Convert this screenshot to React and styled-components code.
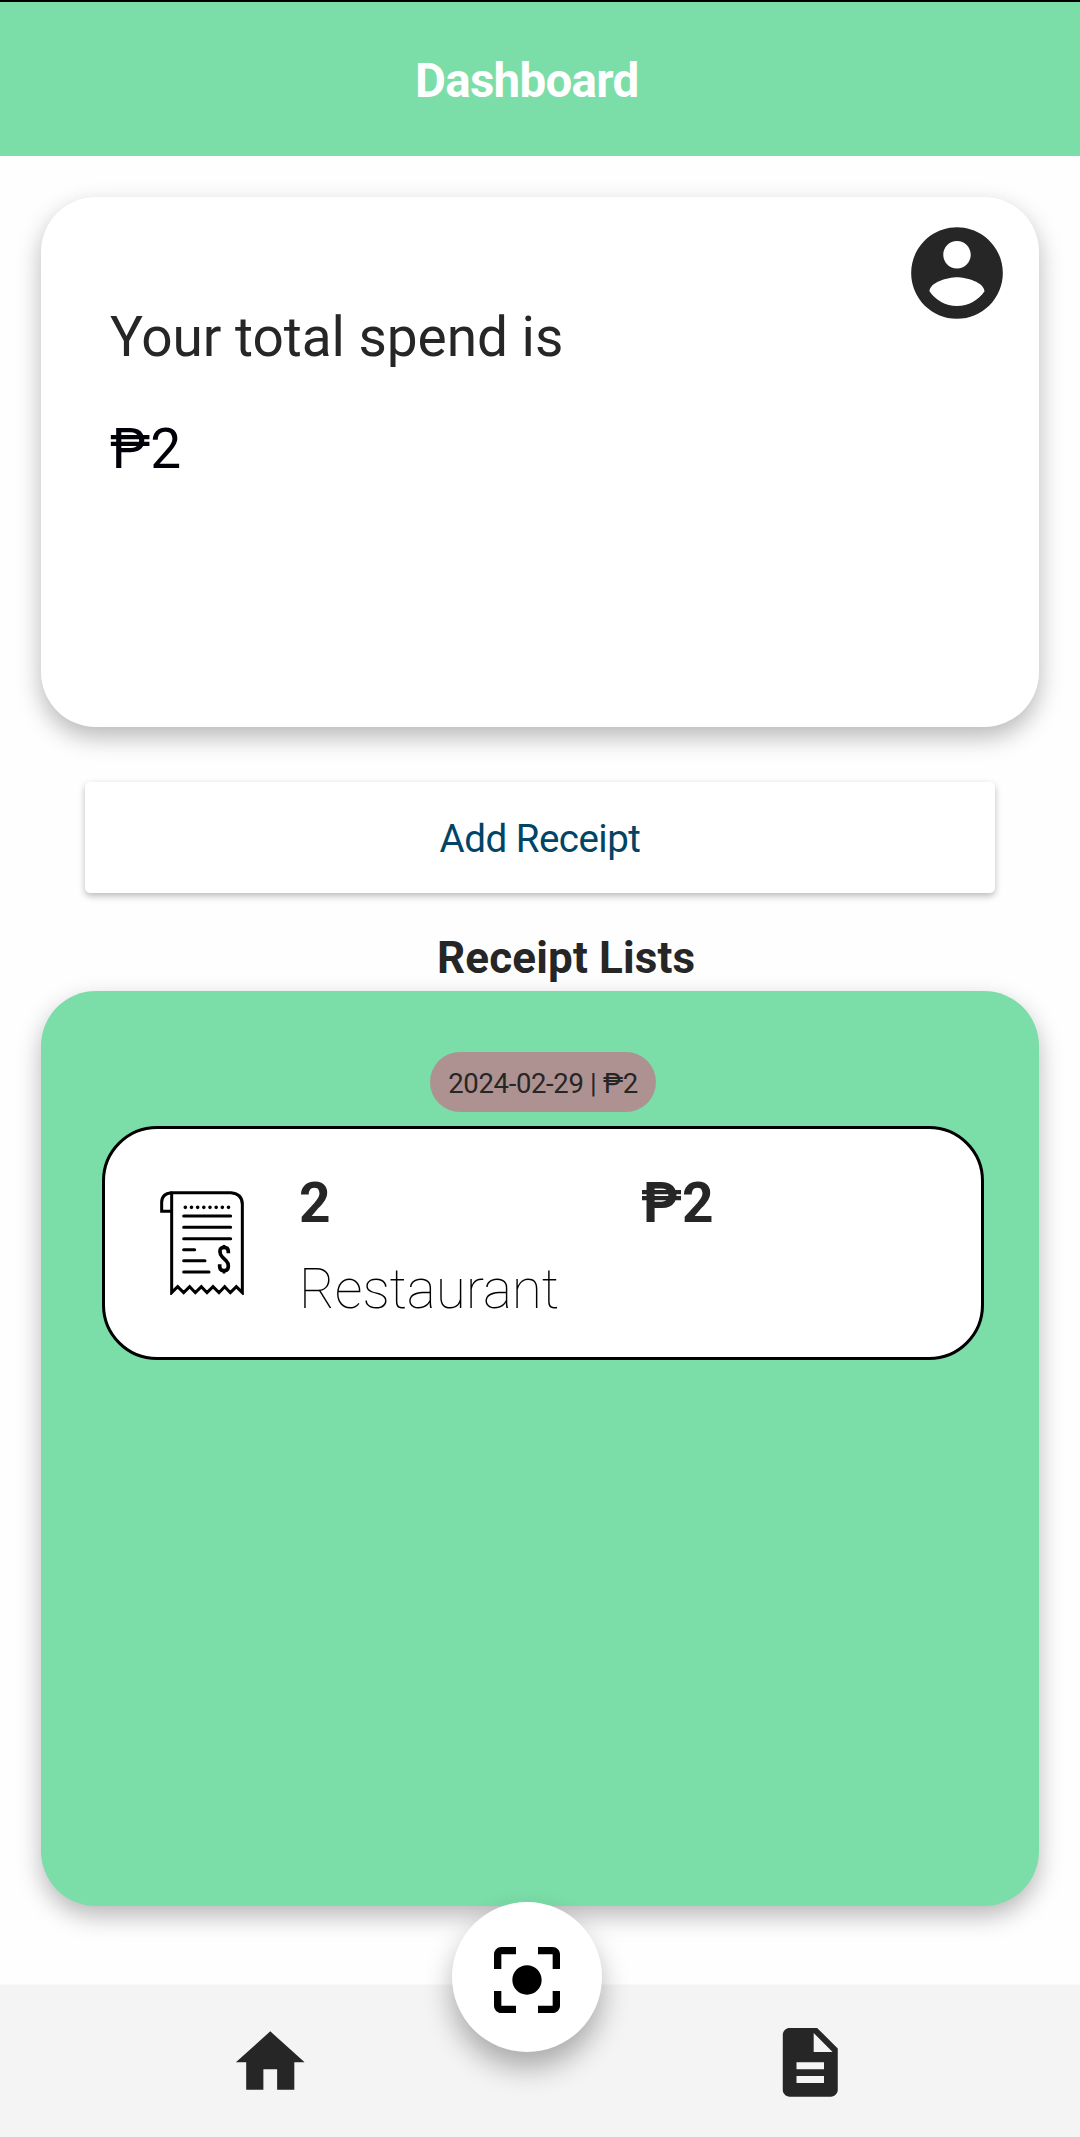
import React from "react";
import styled, { createGlobalStyle } from "styled-components";

const GlobalStyle = createGlobalStyle`
  *, *::before, *::after { box-sizing: border-box; }
  body {
    margin: 0;
    background: #fefefe;
    font-family: Roboto, "Noto Sans", sans-serif;
    color: #262626;
  }
`;

const Screen = styled.div`
  position: relative;
  display: flex;
  flex-direction: column;
  width: 1080px;
  height: 2137px;
  overflow: hidden;
  border-top: 2px solid #000;
  background: #fefefe;
`;

const Header = styled.header`
  display: flex;
  align-items: center;
  flex: none;
  height: 154px;
  padding: 3px 0 0 415px;
  background: #7bdda8;
`;

const Title = styled.h1`
  margin: 0;
  font-size: 47.5px;
  line-height: 60px;
  font-weight: 700;
  letter-spacing: -0.7px;
  color: #fff;
`;

const Content = styled.main`
  display: flex;
  flex-direction: column;
  flex: 1;
  padding: 41px 41px 0;
`;

const SpendCard = styled.section`
  display: flex;
  align-items: flex-start;
  justify-content: space-between;
  height: 530px;
  padding: 21px 27px 0 69px;
  border-radius: 55px;
  background: #fff;
  box-shadow: 0 10px 24px rgba(0, 0, 0, 0.28);
`;

const SpendText = styled.div`
  display: flex;
  flex-direction: column;
  gap: 48px;
  padding-top: 87px;
`;

const Line = styled.p`
  margin: 0;
  font-size: 55px;
  line-height: 64px;
  font-weight: ${(p) => p.$weight || 400};
  letter-spacing: ${(p) => p.$tracking || "-0.05px"};
  color: ${(p) => p.$color || "#262626"};
  white-space: nowrap;
`;

const Glyph = styled.svg`
  display: block;
  flex: none;
  width: ${(p) => p.$size}px;
  height: ${(p) => p.$size}px;
  fill: ${(p) => p.$color || "#262626"};
`;

const AddButton = styled.button`
  height: 111px;
  margin: 55px 44px 0;
  padding: 3px 0 0;
  border: 0;
  border-radius: 5px;
  background: #fff;
  box-shadow: 0 3px 7px rgba(0, 0, 0, 0.27);
  font: 400 38.5px/48px Roboto, "Noto Sans", sans-serif;
  letter-spacing: -0.5px;
  color: #004466;
`;

const ListHeading = styled.h2`
  margin: 35px 0 3px;
  padding-left: 396px;
  font-size: 44px;
  line-height: 60px;
  font-weight: 700;
  letter-spacing: 0.15px;
`;

const ListPanel = styled.section`
  display: flex;
  flex-direction: column;
  align-items: center;
  gap: 14px;
  height: 915px;
  padding: 61px 55px 0 61px;
  border-radius: 55px;
  background: #7bdda8;
  box-shadow: 0 10px 24px rgba(0, 0, 0, 0.28);
`;

const DatePill = styled.div`
  display: flex;
  align-items: center;
  justify-content: center;
  width: 226px;
  height: 60px;
  padding-top: 3px;
  border-radius: 30px;
  background: #ae9292;
  font-size: 27.5px;
  line-height: 34px;
  letter-spacing: -0.35px;
  white-space: nowrap;
`;

const ReceiptCard = styled.article`
  display: grid;
  grid-template-columns: 139px 342px 1fr;
  align-items: start;
  width: 100%;
  height: 234px;
  padding: 42px 0 0 55px;
  border: 3px solid #000;
  border-radius: 55px;
  background: #fff;
`;

const ReceiptDetails = styled.div`
  display: flex;
  flex-direction: column;
  gap: 22px;
`;

const ReceiptArt = styled.svg`
  width: 84px;
  height: 104px;
  margin-top: 20px;
  fill: none;
  stroke: #000;
  stroke-width: 9;
`;

const NavBar = styled.nav`
  display: flex;
  flex: none;
  height: 153px;
  border-top: 1px solid #f9f9f9;
  background: #f4f4f4;
`;

const Tab = styled.a`
  display: flex;
  flex: 1;
  align-items: center;
  justify-content: center;
  padding-top: 2px;
`;

const ScanButton = styled.button`
  position: absolute;
  left: 451.5px;
  bottom: 85px;
  display: flex;
  align-items: center;
  justify-content: center;
  width: 150px;
  height: 150px;
  padding: 6px 0 0 1px;
  border: 0;
  border-radius: 50%;
  background: #fff;
  box-shadow: 0 16px 28px rgba(0, 0, 0, 0.3);
`;

const icons = {
  account:
    "M12 2C6.48 2 2 6.48 2 12s4.48 10 10 10 10-4.48 10-10S17.52 2 12 2zm0 3c1.66 0 3 1.34 3 3s-1.34 3-3 3-3-1.34-3-3 1.34-3 3-3zm0 14.2c-2.5 0-4.71-1.28-6-3.22.03-1.99 4-3.08 6-3.08 1.99 0 5.97 1.09 6 3.08-1.29 1.94-3.5 3.22-6 3.22z",
  home: "M10 20v-6h4v6h5v-8h3L12 3 2 12h3v8z",
  document:
    "M14 2H6c-1.1 0-1.99.9-1.99 2L4 20c0 1.1.89 2 1.99 2H18c1.1 0 2-.9 2-2V8l-6-6zm2 16H8v-2h8v2zm0-4H8v-2h8v2zm-3-5V3.5L18.5 9H13z",
  scan: "M12 8c-2.21 0-4 1.79-4 4s1.79 4 4 4 4-1.79 4-4-1.79-4-4-4zm-7 7H3v4c0 1.1.9 2 2 2h4v-2H5v-4zM5 5h4V3H5c-1.1 0-2 .9-2 2v4h2V5zm14-2h-4v2h4v4h2V5c0-1.1-.9-2-2-2zm0 16h-4v2h4c1.1 0 2-.9 2-2v-4h-2v4z",
};

function Icon({ name, size, color }) {
  return (
    <Glyph viewBox="0 0 24 24" $size={size} $color={color} aria-hidden="true">
      <path d={icons[name]} />
    </Glyph>
  );
}

function ReceiptIcon() {
  return (
    <ReceiptArt viewBox="209 242 252 312" aria-hidden="true">
      <path d="M244 547V247H422Q456 250 456 282V547L438 529 420 547 403 529 386 547 368 529 350 547 333 529 315 547 298 529 280 547 262 529Z" />
      <path d="M244 247Q214 250 214 276V303H244" />
      <path d="M285 291H415" strokeWidth="11" strokeLinecap="round" strokeDasharray="0 18.5" />
      <path
        d="M280 317H421M280 351H421M280 385H421M280 418H313M280 451H344M280 485H356"
        strokeLinecap="round"
      />
      <path
        d="M414 429V424Q414 411 401 411T389 424Q389 433 396 440L408 452Q414 458 414 467 414 481 401 481T388 467V462M401 406V411M401 481V486"
        strokeWidth="11"
      />
      <path d="M401 408V409M401 484V485" strokeWidth="10" strokeLinecap="round" />
    </ReceiptArt>
  );
}

export default function App() {
  return (
    <Screen>
      <GlobalStyle />
      <Header>
        <Title>Dashboard</Title>
      </Header>
      <Content>
        <SpendCard>
          <SpendText>
            <Line>Your total spend is</Line>
            <Line $color="#000008">₱2</Line>
          </SpendText>
          <Icon name="account" size={110} />
        </SpendCard>
        <AddButton>Add Receipt</AddButton>
        <ListHeading>Receipt Lists</ListHeading>
        <ListPanel>
          <DatePill>2024-02-29 | ₱2</DatePill>
          <ReceiptCard>
            <ReceiptIcon />
            <ReceiptDetails>
              <Line $weight={700}>2</Line>
              <Line $weight={100} $color="#000" $tracking="-0.15px">Restaurant</Line>
            </ReceiptDetails>
            <Line $weight={700}>₱2</Line>
          </ReceiptCard>
        </ListPanel>
      </Content>
      <NavBar>
        <Tab>
          <Icon name="home" size={82.5} />
        </Tab>
        <Tab>
          <Icon name="document" size={82.5} />
        </Tab>
      </NavBar>
      <ScanButton aria-label="Scan receipt">
        <Icon name="scan" size={88} color="#000" />
      </ScanButton>
    </Screen>
  );
}
